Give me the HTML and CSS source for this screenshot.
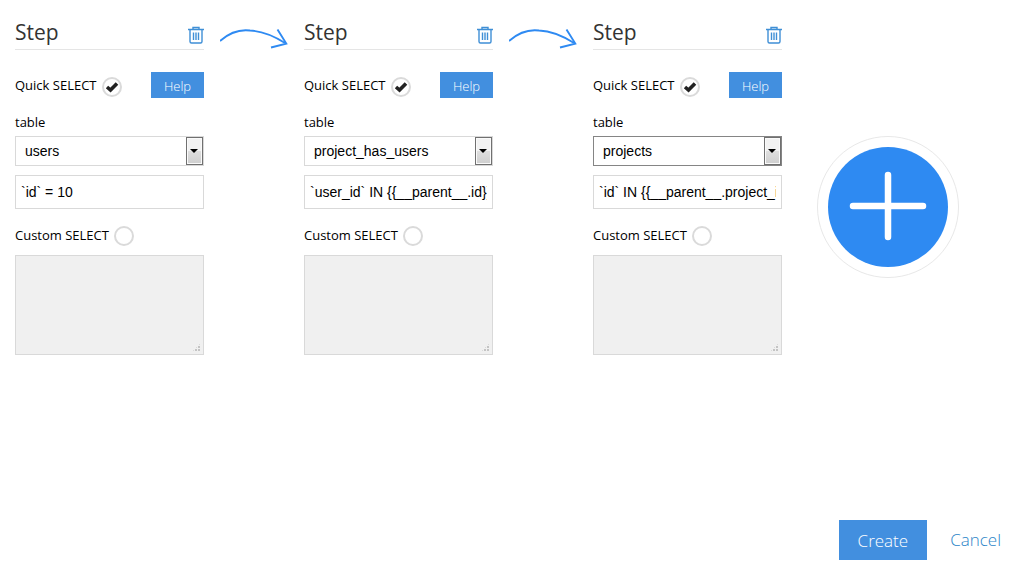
FILE: index.html
```html
<!DOCTYPE html>
<html lang="en">
<head>
<meta charset="utf-8">
<title>Steps</title>
<link rel="stylesheet" href="styles.css">
</head>
<body>
<svg class="symbols" aria-hidden="true">
  <symbol id="trash" viewBox="0 0 16 18">
    <path d="M0 3.5H16M5 3V1.5H11V3M2 4V15.5Q2 17 3.5 17H12.5Q14 17 14 15.5V4M5.5 6.5V14M8 6.5V14M10.5 6.5V14" fill="none" stroke="currentColor" stroke-width="1.4"/>
  </symbol>
  <symbol id="arrow" viewBox="0 0 68 20">
    <path d="M0 12C9 4 18 0 30 1.5C43 2 54 7 65 14" fill="none" stroke="currentColor" stroke-width="1.8"/>
    <path d="M57.5 0.5L66.3 14.6L51 18.5" fill="none" stroke="currentColor" stroke-width="1.9"/>
  </symbol>
</svg>
<form class="page">
  <main class="flow">
    <section class="step">
      <header class="step-head"><h2>Step</h2><button type="button" class="trash" aria-label="Delete step"><svg><use href="#trash"/></svg></button></header>
      <div class="quick"><label for="q1">Quick SELECT</label><input type="radio" class="choice" id="q1" name="mode1" checked><button type="button" class="help">Help</button></div>
      <label class="caption" for="t1">table</label>
      <div class="picker"><select id="t1"><option>users</option></select></div>
      <input type="text" class="where" aria-label="Condition" value="`id` = 10">
      <div class="custom"><label for="c1">Custom SELECT</label><input type="radio" class="choice" id="c1" name="mode1"></div>
      <div class="query"><textarea aria-label="Custom query" disabled></textarea></div>
    </section>
    <svg class="arrow" aria-hidden="true"><use href="#arrow"/></svg>
    <section class="step">
      <header class="step-head"><h2>Step</h2><button type="button" class="trash" aria-label="Delete step"><svg><use href="#trash"/></svg></button></header>
      <div class="quick"><label for="q2">Quick SELECT</label><input type="radio" class="choice" id="q2" name="mode2" checked><button type="button" class="help">Help</button></div>
      <label class="caption" for="t2">table</label>
      <div class="picker"><select id="t2"><option>project_has_users</option></select></div>
      <input type="text" class="where" aria-label="Condition" value="`user_id` IN {{__parent__.id}}">
      <div class="custom"><label for="c2">Custom SELECT</label><input type="radio" class="choice" id="c2" name="mode2"></div>
      <div class="query"><textarea aria-label="Custom query" disabled></textarea></div>
    </section>
    <svg class="arrow" aria-hidden="true"><use href="#arrow"/></svg>
    <section class="step">
      <header class="step-head"><h2>Step</h2><button type="button" class="trash" aria-label="Delete step"><svg><use href="#trash"/></svg></button></header>
      <div class="quick"><label for="q3">Quick SELECT</label><input type="radio" class="choice" id="q3" name="mode3" checked><button type="button" class="help">Help</button></div>
      <label class="caption" for="t3">table</label>
      <div class="picker active"><select id="t3"><option>projects</option></select></div>
      <input type="text" class="where" aria-label="Condition" value="`id` IN {{__parent__.project_id}}">
      <div class="custom"><label for="c3">Custom SELECT</label><input type="radio" class="choice" id="c3" name="mode3"></div>
      <div class="query"><textarea aria-label="Custom query" disabled></textarea></div>
    </section>
    <button type="button" class="add" aria-label="Add step">
      <svg viewBox="0 0 142 142"><circle cx="71" cy="71" r="70.5" fill="#fff" stroke="#e8e8e8"/><circle cx="71" cy="71" r="60" fill="#2e8af2"/><path d="M36 70H106M71 39V101" stroke="#fff" stroke-width="6.5" stroke-linecap="round"/></svg>
    </button>
  </main>
  <footer class="actions">
    <button type="submit" class="create">Create</button>
    <a href="#" class="cancel">Cancel</a>
  </footer>
</form>
</body>
</html>
```
FILE: styles.css
```css
*, *::before { box-sizing: border-box; }
body {
  margin: 0;
  background: #fff;
  color: #000;
  font: 13px/20px "Open Sans", "Noto Sans", sans-serif;
}
.symbols { display: none; }
.page {
  min-height: 100vh;
  display: flex;
  flex-direction: column;
  justify-content: space-between;
}
.flow {
  display: grid;
  grid-template-columns: 1fr 100px 1fr 100px 1fr 177px;
  align-items: start;
  padding: 16px 77px 0 15px;
}
.step {
  min-width: 0;
  display: flex;
  flex-direction: column;
}
.step-head {
  display: flex;
  justify-content: space-between;
  align-items: flex-start;
  height: 34px;
  border-bottom: 1px solid #e5e5e5;
  margin-bottom: 22px;
}
h2 {
  margin: 0;
  color: #333;
  font-size: 21px;
  font-weight: 400;
  line-height: 32px;
}
.trash {
  width: 16px;
  height: 18px;
  margin-top: 10px;
  padding: 0;
  border: 0;
  background: none;
  color: #3f8fd6;
}
.trash svg { display: block; width: 16px; height: 18px; }
.quick, .custom {
  display: flex;
  align-items: flex-start;
  gap: 5px;
}
.quick { height: 26px; padding-top: 3px; margin-bottom: 14px; }
.quick > label, .custom > label { white-space: nowrap; }
.custom { margin-top: 16px; }
.choice {
  appearance: none;
  flex: none;
  width: 20px;
  height: 20px;
  margin: 1px 0 0;
  border: 2px solid #dadada;
  border-radius: 50%;
  background: #fff;
}
.quick .choice { margin-top: 2px; }
.choice:checked {
  background: #fff url("data:image/svg+xml,%3Csvg xmlns='http://www.w3.org/2000/svg' viewBox='0 0 16 16'%3E%3Cpath d='M3 8L6.500 11L13 4.500' fill='none' stroke='%23222' stroke-width='3.600'/%3E%3C/svg%3E") center / 16px 16px no-repeat;
}
.help {
  width: 53px;
  height: 26px;
  margin: -3px 0 0 auto;
  padding: 2px 0 0;
  border: 0;
  background: #428fdf;
  color: #fff;
  font: 300 13px/20px "Open Sans", sans-serif;
}
.caption { margin-bottom: 4px; }
.picker { position: relative; margin-bottom: 9px; }
.picker select {
  appearance: none;
  display: block;
  width: 100%;
  height: 30px;
  padding: 0 20px 0 9px;
  border: 1px solid #d9d9d9;
  border-radius: 0;
  background: #fff;
  color: #000;
  font: 14px/20px "Liberation Sans", Arial, sans-serif;
}
.picker.active select { border-color: #858585; }
.picker::before {
  content: "";
  position: absolute;
  top: 1px;
  right: 1px;
  width: 17px;
  height: 28px;
  border: 1px solid #707070;
  box-shadow: inset 0 0 0 1px #fafafa;
  background: linear-gradient(#f2f2f2 50%, #dfdfdf 50%, #cfcfcf);
  pointer-events: none;
}
.picker::after {
  content: "";
  position: absolute;
  top: 13px;
  right: 6px;
  border: 4px solid transparent;
  border-top-color: #000;
  border-bottom: 0;
  pointer-events: none;
}
.where {
  width: 100%;
  height: 34px;
  padding: 0 5px;
  border: 1px solid #d9d9d9;
  font: 14px/20px "Liberation Sans", Arial, sans-serif;
  color: #000;
}
.query { position: relative; margin-top: 9px; }
.query textarea {
  display: block;
  width: 100%;
  height: 100px;
  border: 1px solid #d9d9d9;
  background: #f0f0f0;
  resize: none;
}
.query::after {
  content: "";
  position: absolute;
  right: 3px;
  bottom: 3px;
  width: 9px;
  height: 9px;
  background: radial-gradient(circle at 1px 1px, #c4c4c4 1px, transparent 1px) 0 0 / 3px 3px;
  clip-path: polygon(100% 0, 100% 100%, 0 100%);
}
.arrow {
  width: 68px;
  height: 20px;
  margin: 13px 0 0 16px;
  color: #2e8af2;
}
.add {
  width: 142px;
  height: 142px;
  margin: 120px 0 0 35px;
  padding: 0;
  border: 0;
  background: none;
}
.add svg { display: block; width: 100%; height: 100%; }
.actions {
  display: flex;
  justify-content: flex-end;
  align-items: center;
  gap: 23px;
  padding: 16px 35px 11px;
  font-size: 17px;
  font-weight: 300;
}
.create {
  height: 40px;
  padding: 1px 19px 0;
  border: 0;
  background: #428fdf;
  color: #fff;
  font: inherit;
}
.cancel { color: #2a84c8; text-decoration: none; }
```
